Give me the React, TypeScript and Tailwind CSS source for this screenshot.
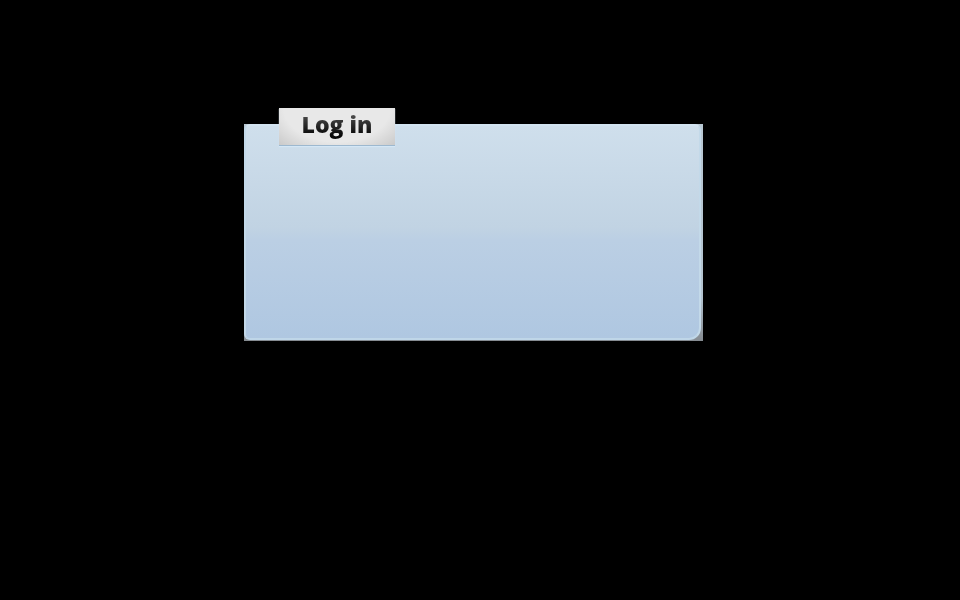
export default function App() {
  return (
    <main className="flex min-h-screen items-start justify-center bg-black pr-[13px] pt-[108px]">
      <section
        aria-labelledby="login-title"
        className="flex w-full max-w-[459px] flex-col items-start"
      >
        <header className="z-10 -mb-[22px] ml-[35px] flex h-[38px] w-[116px] justify-center border-b border-[#9db8cf] bg-[radial-gradient(ellipse_at_top,#e8e8e8_65%,#b4b4b4_125%)] shadow-[0_1px_1px_#d4e7f6]">
          <h1
            id="login-title"
            className="bg-linear-to-b from-[#4b4b4b] from-20% to-[#080808] to-75% bg-clip-text font-['Open_Sans',sans-serif] text-[23px] leading-8 font-extrabold text-transparent"
          >
            Log in
          </h1>
        </header>
        <div className="h-[217px] w-full bg-linear-to-b from-[#b9c8d3] via-[#b3c3d0] via-80% to-[#858b91] pr-0.5 pb-px">
          <div className="h-full rounded-md rounded-br-xl border-2 border-t-[#d3e4f1] border-r-[#c3d9e9] border-b-[#bfd6e8] border-l-[#c3d9e9] bg-[linear-gradient(#cfdfec,#c1d3e3_48%,#bbcfe4_54%,#afc7e1)]" />
        </div>
      </section>
    </main>
  );
}
